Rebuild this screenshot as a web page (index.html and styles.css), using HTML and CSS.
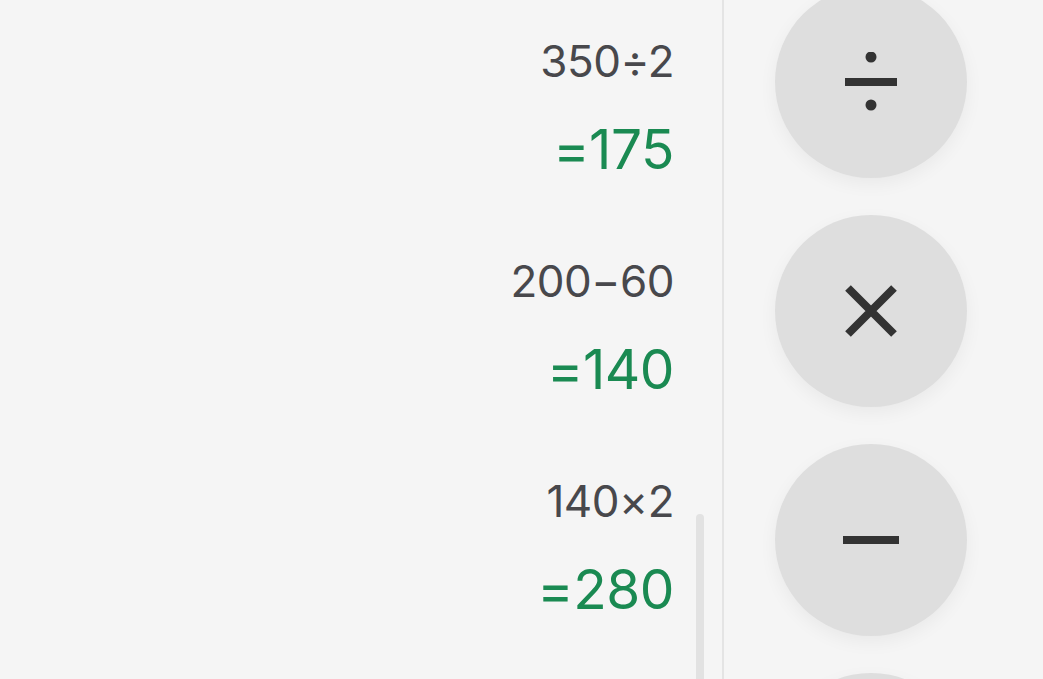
FILE: index.html
```html
<!DOCTYPE html>
<html lang="en">
<head>
<meta charset="utf-8">
<title>Calculator</title>
<link rel="stylesheet" href="styles.css">
</head>
<body>
<div class="app">
  <section class="history">
    <ul class="entries">
      <li class="entry">
        <div class="expr">350÷2</div>
        <div class="result">=175</div>
      </li>
      <li class="entry">
        <div class="expr">200−60</div>
        <div class="result">=140</div>
      </li>
      <li class="entry">
        <div class="expr">140×2</div>
        <div class="result">=280</div>
      </li>
    </ul>
    <div class="track"><div class="thumb"></div></div>
  </section>
  <div class="divider"></div>
  <section class="keys">
    <button class="key" aria-label="divide">
      <svg width="60" height="60" viewBox="0 0 60 60"><rect x="4" y="26" width="52" height="8" fill="#333"/><circle cx="30" cy="5" r="5.5" fill="#333"/><circle cx="30" cy="53" r="5.5" fill="#333"/></svg>
    </button>
    <button class="key" aria-label="multiply">
      <svg width="60" height="60" viewBox="0 0 60 60"><path d="M7 7 L53 53 M53 7 L7 53" stroke="#333" stroke-width="8" fill="none"/></svg>
    </button>
    <button class="key" aria-label="minus">
      <svg width="60" height="60" viewBox="0 0 60 60"><rect x="2" y="26" width="56" height="8" fill="#333"/></svg>
    </button>
    <button class="key" aria-label="plus"></button>
  </section>
</div>
</body>
</html>
```

FILE: styles.css
```css
html, body {
  margin: 0;
  padding: 0;
  height: 100%;
  background: #f5f5f5;
  overflow: hidden;
  font-family: Inter, "Noto Sans", sans-serif;
}

.app {
  display: flex;
  height: 679px;
  overflow: hidden;
}

.history {
  flex: 0 0 722px;
  display: flex;
}

.entries {
  flex: 1;
  list-style: none;
  margin: 0;
  padding: 31px 22px 0 0;
  text-align: right;
}

.entry {
  margin-bottom: 62px;
}

.expr {
  font-size: 44px;
  line-height: 60px;
  letter-spacing: -0.5px;
  color: #48484c;
}

.result {
  margin-top: 18px;
  font-size: 55px;
  line-height: 80px;
  letter-spacing: -0.5px;
  color: #1a8a52;
}

.track {
  flex: 0 0 8px;
  margin-right: 18px;
  padding-top: 514px;
}

.thumb {
  height: 200px;
  background: #e2e2e2;
  border-radius: 4px;
}

.divider {
  flex: 0 0 2px;
  background: #e4e4e4;
}

.keys {
  flex: 1;
  display: flex;
  flex-direction: column;
  align-items: center;
  gap: 37px;
  margin-top: -14px;
  padding-right: 25px;
}

.key {
  flex: 0 0 192px;
  width: 192px;
  height: 192px;
  border: none;
  border-radius: 50%;
  background: #dedede;
  box-shadow: 0 6px 18px rgba(0, 0, 0, 0.05);
  display: flex;
  align-items: center;
  justify-content: center;
  padding: 0;
}
```
